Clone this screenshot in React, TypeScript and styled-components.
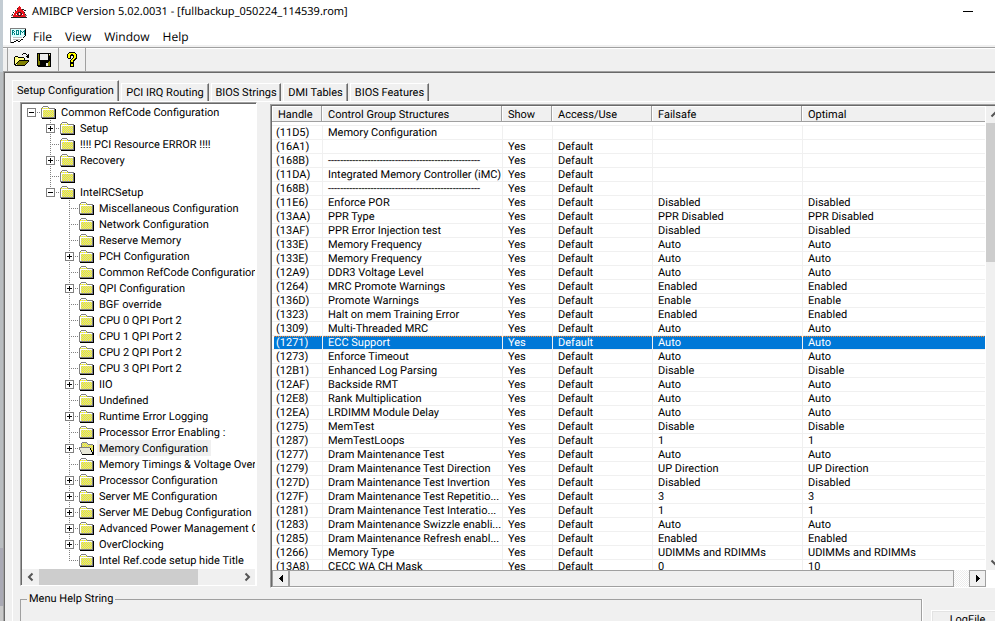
import React from "react";
import styled, { createGlobalStyle, css } from "styled-components";

const FACE = "#f0f0f0";
const SHADOW = "#a0a0a0";
const DARK = "#696969";
const BLUE = "#0078d7";

const GlobalStyle = createGlobalStyle`
  * { box-sizing: border-box; }
  html, body, #root { height: 100%; }
  body {
    margin: 0;
    overflow: hidden;
    font: 11px/14px Roboto, "Liberation Sans", sans-serif;
    text-rendering: geometricPrecision;
    color: #000;
    background: ${FACE};
  }
  button { font: inherit; color: inherit; border: 0; padding: 0; background: none; text-rendering: inherit; }
`;

const Screen = styled.div`
  display: flex;
  height: 100vh;
  overflow: hidden;
`;

const Backdrop = styled.div`
  flex: 0 0 3px;
  background: linear-gradient(#c3ccd3 0 72px, #b9bdc0 72px 548px, #a9a9b4 548px 606px, #c8c8c8 606px);
`;

const Window = styled.main`
  flex: 1;
  min-width: 0;
  display: flex;
  flex-direction: column;
`;

const TitleBar = styled.header`
  display: flex;
  align-items: center;
  gap: 5px;
  height: 24px;
  padding: 0 22px 0 8px;
  background: #fff;
  font: 11px/16px "Noto Sans", sans-serif;
`;

const Title = styled.h1`
  flex: 1;
  margin: 0;
  font: inherit;
  white-space: nowrap;
`;

const Minimize = styled.button`
  width: 10px;
  height: 10px;
  border-bottom: 1px solid #000;
  margin-bottom: 10px;
`;

const MenuBar = styled.nav`
  display: flex;
  align-items: center;
  gap: 7px;
  height: 21px;
  padding: 2px 0 0 7px;
  background: #fff;
  font: 12px/16px "Open Sans", sans-serif;
`;

const MenuItems = styled.div`
  display: flex;
  gap: 13px;
  padding-top: 2px;
`;

const ToolBar = styled.div`
  display: flex;
  align-items: stretch;
  height: 26px;
  padding: 3px 0 0 4px;
  background: linear-gradient(${FACE} 2px, ${SHADOW} 2px 3px, #fff 3px 4px, ${FACE} 4px);
`;

const ToolGroup = styled.div`
  display: flex;
  align-items: center;
  border-left: 1px solid ${SHADOW};
  padding: 0 6px;
  gap: 6px;

  &:last-child { border-right: 1px solid ${SHADOW}; padding: 0 5px; }
`;

const ToolButton = styled.button`
  display: flex;
  width: 16px;
  height: 16px;
`;

const Workspace = styled.div`
  flex: 1;
  min-height: 0;
  display: flex;
  flex-direction: column;
  border-top: 1px solid ${SHADOW};
  border-left: 1px solid ${SHADOW};
  background: ${FACE};
`;

const WorkspaceInner = styled.div`
  flex: 1;
  min-height: 0;
  display: flex;
  flex-direction: column;
  border-top: 1px solid ${DARK};
  border-left: 1px solid ${DARK};
  padding: 7px 0 0 7px;
`;

const Tabs = styled.div`
  display: flex;
  align-items: flex-end;
  gap: 2px;
  height: 21px;
`;

const Tab = styled.button<{ $selected?: boolean; $width: number }>`
  flex: 0 0 ${(p) => p.$width}px;
  height: 18px;
  border-top: 1px solid #fff;
  border-left: 1px solid #fff;
  border-right: 1px solid ${DARK};
  box-shadow: inset -1px 0 0 ${SHADOW};
  white-space: nowrap;
  ${(p) =>
    p.$selected &&
    css`
      height: 22px;
      margin-bottom: -1px;
      padding-bottom: 2px;
      background: ${FACE};
    `}
`;

const TabPage = styled.section`
  flex: 1;
  min-height: 0;
  display: flex;
  flex-direction: column;
  border-top: 1px solid #fff;
  border-left: 1px solid #fff;
`;

const Panes = styled.div`
  flex: 1;
  min-height: 0;
  display: flex;
  gap: 13px;
  padding-left: 7px;
`;

const Sunken = styled.div`
  display: flex;
  flex-direction: column;
  min-height: 0;
  background: #fff;
  border: 1px solid;
  border-color: ${SHADOW} #fff #fff ${SHADOW};
  box-shadow: inset 1px 1px 0 ${DARK};
  padding: 1px 0 0 1px;
`;

const TreePane = styled(Sunken)`
  flex: 0 0 237px;
  min-width: 0;
  margin-bottom: 2px;
`;

const ListPane = styled(Sunken)`
  flex: 1;
  min-width: 0;
  margin: 2px -9px 0 0;
`;

const Tree = styled.ul`
  flex: 1;
  min-height: 0;
  overflow: hidden;
  list-style: none;
  margin: 0 1px 0 0;
  padding: 0;
`;

const TreeRow = styled.li`
  display: flex;
  height: 16px;
  white-space: nowrap;

  > svg { flex: none; }
`;

const dots = (dir: string) => `repeating-linear-gradient(${dir}, #808080 0 1px, transparent 1px 2px)`;

type GuideKind = "blank" | "root" | "tee" | "end";

const Guide = styled.span<{ $kind: GuideKind }>`
  flex: 0 0 19px;
  display: flex;
  align-items: center;
  justify-content: center;
  background-repeat: no-repeat;
  ${(p) =>
    p.$kind !== "blank" &&
    css`
      background-image: ${dots("to right")}, ${dots("to bottom")};
      background-size: 10px 1px, 1px ${p.$kind === "tee" ? 16 : p.$kind === "end" ? 8 : 0}px;
      background-position: 9px 8px, 9px 0;
    `}
`;

const Expander = styled.button`
  display: flex;
  width: 9px;
  height: 9px;
  margin-top: 1px;
  background: #fff;
`;

const TreeLabel = styled.span<{ $selected?: boolean }>`
  margin-left: 2px;
  padding: 2px 3px 0 2px;
  line-height: 14px;
  background: ${(p) => (p.$selected ? FACE : "transparent")};
`;

const TreeScroll = styled.div`
  display: flex;
  align-items: center;
  height: 16px;
  background: ${FACE};
  margin-right: 1px;
`;

const FlatArrow = styled.button`
  flex: 0 0 17px;
  display: flex;
  justify-content: center;
`;

const FlatTrack = styled.div`
  flex: 1;
  align-self: stretch;
  display: flex;
`;

const FlatThumb = styled.div`
  flex: 0 0 80%;
  background: #cdcdcd;
`;

const ListBody = styled.div`
  flex: 1;
  min-height: 0;
  display: flex;
`;

const TableClip = styled.div`
  flex: 1;
  min-width: 0;
  overflow: hidden;
`;

const Table = styled.table`
  width: 100%;
  table-layout: fixed;
  border-collapse: separate;
  border-spacing: 0;
  white-space: nowrap;
`;

const Col = styled.col<{ $width?: number }>`
  width: ${(p) => (p.$width ? `${p.$width}px` : "auto")};
`;

const HeadCell = styled.th`
  height: 16px;
  padding: 2px 0 0 6px;
  line-height: 13px;
  text-align: left;
  font-weight: normal;
  background: ${FACE};
  border-bottom: 1px solid ${SHADOW};
  border-right: 1px solid ${SHADOW};
  box-shadow: inset 1px 1px 0 #fff;

  &:last-child { border-right: 0; }
`;

const SpacerCell = styled.td`
  height: 4px;
  padding: 0;
  border-bottom: 1px solid ${FACE};
`;

const Cell = styled.td`
  height: 14px;
  padding: 0 0 0 5px;
  line-height: 13px;
  overflow: hidden;
  border-bottom: 1px solid ${FACE};
  border-left: 1px solid ${FACE};

  &:first-child { padding-left: 4px; border-left: 0; }
`;

const Row = styled.tr<{ $selected?: boolean }>`
  ${(p) =>
    p.$selected &&
    css`
      color: #fff;
      ${Cell} {
        background: repeating-linear-gradient(to right, #ff8728 0 1px, ${BLUE} 1px 2px) top / 100% 1px no-repeat ${BLUE};
        background-clip: padding-box;
      }
      ${Cell}:first-child { box-shadow: inset 2px 0 0 #fff; }
    `}
`;

const VScroll = styled.div`
  flex: 0 0 17px;
  display: flex;
  flex-direction: column;
  margin-left: 1px;
  background: ${FACE};
`;

const VArrow = styled.button`
  flex: 0 0 17px;
  display: flex;
  align-items: center;
  justify-content: center;
`;

const VThumb = styled.div`
  flex: 0 0 139px;
  background: #cdcdcd;
`;

const VTrack = styled.div`
  flex: 1;
`;

const HScroll = styled.div`
  display: flex;
  height: 17px;
  margin-right: 17px;
  background: repeating-conic-gradient(#fff 0 25%, #ececec 0 50%) 0 0 / 2px 2px;
`;

const ClassicPart = styled.button<{ $grow?: boolean }>`
  flex: ${(p) => (p.$grow ? "1" : "0 0 17px")};
  margin-right: ${(p) => (p.$grow ? 15 : 0)}px;
  display: flex;
  align-items: center;
  justify-content: center;
  background: ${FACE};
  border: 1px solid ${SHADOW};
`;

const Footer = styled.div`
  display: flex;
  align-items: flex-start;
  gap: 9px;
  height: 33px;
  margin-right: -9px;
  padding-left: 7px;
`;

const Group = styled.fieldset`
  flex: 1;
  min-width: 0;
  height: 60px;
  margin: 4px 0 0;
  padding: 0 0 0 6px;
  border: 1px solid ${SHADOW};
  box-shadow: 1px 0 0 #fff;
`;

const Legend = styled.legend`
  padding: 0 2px;
  line-height: 14px;
`;

const LogButton = styled.button`
  flex: 0 0 73px;
  height: 20px;
  margin-top: 22px;
  border: 1px solid #fff;
  box-shadow: inset 1px 1px 0 #e3e3e3;
`;

function AmiIcon() {
  return (
    <svg width="16" height="12" viewBox="0 0 16 12" shapeRendering="crispEdges" aria-hidden="true">
      <path d="M8 0h1v1h1v2h1v1h1v1h1v2h1v2h1v2H2V9h1V7h1V5h2V3h1V1h1z" fill="#e8141c" />
      <path d="M6 2h1v1H6zM4 4h1v1H4zM2 6h1v1H2zM1 8h1v1H1zM11 3h2v1h-2zM13 4h2v1h-2zM13 6h1v1h-1zM14 8h1v1h-1zM7 6h3v1H7zM6 7h1v2H6zM10 7h1v2h-1zM7 9h3v1H7zM0 11h16v1H0z" fill="#222" />
      <path d="M8 7h1v2H8zM5 8h1v1H5zM11 8h1v1h-1z" fill="#fff" />
      <path d="M0 9h2v1H0zM14 9h2v1h-2z" fill="#888" />
    </svg>
  );
}

function RomIcon() {
  return (
    <svg width="16" height="16" viewBox="0 0 16 16" shapeRendering="crispEdges" aria-hidden="true">
      <path d="M0 0h16v9H0z" fill="#dff" />
      <path d="M0 0h16v1H0zM0 0h1v15H0z" fill="#808080" />
      <path d="M2 2h2v1H2zM2 2h1v5H2zM4 3h1v1H4zM2 4h2v1H2zM4 5h1v2H4zM6 2h3v1H6zM6 2h1v5H6zM8 2h1v5H8zM6 6h3v1H6zM10 2h1v5h-1zM14 2h1v5h-1zM11 3h1v1h-1zM13 3h1v1h-1zM12 4h1v1h-1z" fill="#008080" />
      <path d="M3 9h9v1H3zM3 11h7v1H3z" fill="#c0c0c0" />
      <path d="M15 1h1v7h-1zM14 8h1v1h-1zM13 9h1v1h-1zM11 11h2v1h-2zM10 12h1v1h-1zM8 13h2v1H8zM6 12h2v1H6zM4 13h2v1H4zM1 14h3v1H1z" fill="#000" />
    </svg>
  );
}

function OpenIcon() {
  return (
    <svg width="16" height="16" viewBox="0 0 16 16" shapeRendering="crispEdges" aria-hidden="true">
      <path d="M1 5h3v1h6v3H5v1H4v1H3v1H2v1H1z" fill="#ffff80" />
      <path d="M5 9h10v1h-1v1h-1v1h-1v1h-1v1H2v-1h1v-2h1v-1h1z" fill="#808000" />
      <path d="M1 4h3v1H1zM4 5h6v1H4zM0 5h1v8H0zM10 6h1v2h-1zM5 8h10v1H5zM4 9h1v1H4zM3 10h1v1H3zM2 11h1v1H2zM1 12h1v2H1zM14 9h1v1h-1zM13 10h1v1h-1zM12 11h1v1h-1zM11 12h1v1h-1zM2 13h9v1H2zM9 1h3v1H9zM8 2h1v1H8zM12 2h1v1h-1zM14 2h1v4h-1zM13 3h1v3h-1zM12 4h1v1h-1z" fill="#000" />
    </svg>
  );
}

function SaveIcon() {
  return (
    <svg width="16" height="16" viewBox="0 0 16 16" shapeRendering="crispEdges" aria-hidden="true">
      <path d="M1 1h14v14H2v-1H1z" fill="#000" />
      <path d="M2 2h1v7h1v1h9V9h1V4h-1V2h1v12h-2v-4H4v3H2z" fill="#808000" />
      <path d="M4 2h8v6H4zM10 11h2v3h-2z" fill="#ececec" />
      <path d="M13 2h1v1h-1z" fill="#ececec" />
    </svg>
  );
}

function HelpIcon() {
  return (
    <svg width="16" height="16" viewBox="0 0 16 16" shapeRendering="crispEdges" aria-hidden="true">
      <path d="M5 0h6v1h1v1h1v5h-1v1h-1v1h-1v2H6V8h1V7h1V6h1V4H7v3H4V6H3V2h1V1h1zM6 11h4v4H6z" fill="#000" />
      <path d="M5 1h6v1h1v4h-1v1h-1v1H9v2H7V8h1V7h1V6h1V3H9V2H7v1H6v3H4V2h1zM7 12h2v2H7z" fill="#ffff00" />
    </svg>
  );
}

function FolderIcon({ open }: { open?: boolean }) {
  return (
    <svg width="16" height="16" viewBox="0 0 16 16" shapeRendering="crispEdges" aria-hidden="true">
      <defs>
        <pattern id="weave" width="2" height="2" patternUnits="userSpaceOnUse">
          <path d="M0 0h2v2H0z" fill="#ffff00" />
          <path d="M0 0h1v1H0zM1 1h1v1H1z" fill="#c8c8c8" />
        </pattern>
      </defs>
      {open ? (
        <>
          <path d="M3 3h5v1h6v10H3z" fill="url(#weave)" />
          <path d="M3 2h5v1H3zM2 3h1v4H2zM8 3h1v1H8zM9 4h5v1H9zM0 7h11v1H0zM0 8h1v2H0zM1 10h1v2H1zM2 12h1v2H2z" fill="#808080" />
          <path d="M1 8h10v2h1v2h1v2H3v-2H2v-2H1z" fill="#e8e8d8" />
          <path d="M14 5h1v10H3v-1h10v-2h-1v-2h-1V8h1v2h1v2h1z" fill="#000" />
        </>
      ) : (
        <>
          <path d="M2 3h5v1h1v1h5v8H1V4h1z" fill="url(#weave)" />
          <path d="M2 2h5v1H2zM1 3h1v1H1zM7 3h1v1H7zM8 4h6v1H8zM0 4h1v9H0zM0 13h14v1H0zM13 5h1v8h-1z" fill="#808080" />
          <path d="M1 5h12v1H1zM1 5h1v8H1zM2 3h5v1H2z" fill="#fff" />
          <path d="M14 5h1v10H1v-1h13z" fill="#000" />
        </>
      )}
    </svg>
  );
}

function ExpanderMark({ expanded }: { expanded: boolean }) {
  return (
    <svg width="9" height="9" viewBox="0 0 9 9" shapeRendering="crispEdges" aria-hidden="true">
      <path d="M0 0h9v9H0zM1 1v7h7V1z" fillRule="evenodd" fill="#808080" />
      <path d={expanded ? "M2 4h5v1H2z" : "M2 4h5v1H2zM4 2h1v5H4z"} fill="#000" />
    </svg>
  );
}

function Chevron({ dir }: { dir: "left" | "right" | "up" | "down" }) {
  const d = {
    left: "M6.5 1.5 3 5l3.5 3.5",
    right: "M3.5 1.5 7 5 3.5 8.5",
    up: "M1.5 6.5 5 3l3.5 3.5",
    down: "M1.5 3.5 5 7l3.5-3.5",
  }[dir];
  return (
    <svg width="10" height="10" viewBox="0 0 10 10" aria-hidden="true">
      <path d={d} fill="none" stroke="#555" strokeWidth="2" />
    </svg>
  );
}

function Triangle({ dir }: { dir: "left" | "right" }) {
  return (
    <svg width="4" height="7" viewBox="0 0 4 7" shapeRendering="crispEdges" aria-hidden="true">
      <path d={dir === "left" ? "M3 0h1v7H3zM2 1h1v5H2zM1 2h1v3H1zM0 3h1v1H0z" : "M0 0h1v7H0zM1 1h1v5H1zM2 2h1v3H2zM3 3h1v1H3z"} />
    </svg>
  );
}

type Node = { level: number; label: string; mark?: "+" | "-"; selected?: boolean };

const nodes: Node[] = [
  { level: 0, label: "Common RefCode Configuration", mark: "-" },
  { level: 1, label: "Setup", mark: "+" },
  { level: 1, label: "!!!! PCI Resource ERROR !!!!" },
  { level: 1, label: "Recovery", mark: "+" },
  { level: 1, label: "" },
  { level: 1, label: "IntelRCSetup", mark: "-" },
  { level: 2, label: "Miscellaneous Configuration" },
  { level: 2, label: "Network Configuration" },
  { level: 2, label: "Reserve Memory" },
  { level: 2, label: "PCH Configuration", mark: "+" },
  { level: 2, label: "Common RefCode Configuration" },
  { level: 2, label: "QPI Configuration", mark: "+" },
  { level: 2, label: "BGF override" },
  { level: 2, label: "CPU 0 QPI Port 2" },
  { level: 2, label: "CPU 1 QPI Port 2" },
  { level: 2, label: "CPU 2 QPI Port 2" },
  { level: 2, label: "CPU 3 QPI Port 2" },
  { level: 2, label: "IIO", mark: "+" },
  { level: 2, label: "Undefined" },
  { level: 2, label: "Runtime Error Logging", mark: "+" },
  { level: 2, label: "Processor Error Enabling :" },
  { level: 2, label: "Memory Configuration", mark: "+", selected: true },
  { level: 2, label: "Memory Timings & Voltage Override" },
  { level: 2, label: "Processor Configuration", mark: "+" },
  { level: 2, label: "Server ME Configuration", mark: "+" },
  { level: 2, label: "Server ME Debug Configuration", mark: "+" },
  { level: 2, label: "Advanced Power Management Configuration", mark: "+" },
  { level: 2, label: "OverClocking", mark: "+" },
  { level: 2, label: "Intel Ref.code setup hide Title" },
];

const tabs = [
  { label: "Setup Configuration", width: 107 },
  { label: "PCI IRQ Routing", width: 88 },
  { label: "BIOS Strings", width: 70 },
  { label: "DMI Tables", width: 65 },
  { label: "BIOS Features", width: 79 },
];

const columns = [
  { label: "Handle", width: 50 },
  { label: "Control Group Structures", width: 180 },
  { label: "Show", width: 50 },
  { label: "Access/Use", width: 100 },
  { label: "Failsafe", width: 150 },
  { label: "Optimal" },
];

const RULE = "-".repeat(50);

const rows: string[][] = [
  ["(11D5)", "Memory Configuration", "", "", "", ""],
  ["(16A1)", "", "Yes", "Default", "", ""],
  ["(168B)", RULE, "Yes", "Default", "", ""],
  ["(11DA)", "Integrated Memory Controller (iMC)", "Yes", "Default", "", ""],
  ["(168B)", RULE, "Yes", "Default", "", ""],
  ["(11E6)", "Enforce POR", "Yes", "Default", "Disabled", "Disabled"],
  ["(13AA)", "PPR Type", "Yes", "Default", "PPR Disabled", "PPR Disabled"],
  ["(13AF)", "PPR Error Injection test", "Yes", "Default", "Disabled", "Disabled"],
  ["(133E)", "Memory Frequency", "Yes", "Default", "Auto", "Auto"],
  ["(133E)", "Memory Frequency", "Yes", "Default", "Auto", "Auto"],
  ["(12A9)", "DDR3 Voltage Level", "Yes", "Default", "Auto", "Auto"],
  ["(1264)", "MRC Promote Warnings", "Yes", "Default", "Enabled", "Enabled"],
  ["(136D)", "Promote Warnings", "Yes", "Default", "Enable", "Enable"],
  ["(1323)", "Halt on mem Training Error", "Yes", "Default", "Enabled", "Enabled"],
  ["(1309)", "Multi-Threaded MRC", "Yes", "Default", "Auto", "Auto"],
  ["(1271)", "ECC Support", "Yes", "Default", "Auto", "Auto"],
  ["(1273)", "Enforce Timeout", "Yes", "Default", "Auto", "Auto"],
  ["(12B1)", "Enhanced Log Parsing", "Yes", "Default", "Disable", "Disable"],
  ["(12AF)", "Backside RMT", "Yes", "Default", "Auto", "Auto"],
  ["(12E8)", "Rank Multiplication", "Yes", "Default", "Auto", "Auto"],
  ["(12EA)", "LRDIMM Module Delay", "Yes", "Default", "Auto", "Auto"],
  ["(1275)", "MemTest", "Yes", "Default", "Disable", "Disable"],
  ["(1287)", "MemTestLoops", "Yes", "Default", "1", "1"],
  ["(1277)", "Dram Maintenance Test", "Yes", "Default", "Auto", "Auto"],
  ["(1279)", "Dram Maintenance Test Direction", "Yes", "Default", "UP Direction", "UP Direction"],
  ["(127D)", "Dram Maintenance Test Invertion", "Yes", "Default", "Disabled", "Disabled"],
  ["(127F)", "Dram Maintenance Test Repetitio...", "Yes", "Default", "3", "3"],
  ["(1281)", "Dram Maintenance Test Interatio...", "Yes", "Default", "1", "1"],
  ["(1283)", "Dram Maintenance Swizzle enabli...", "Yes", "Default", "Auto", "Auto"],
  ["(1285)", "Dram Maintenance Refresh enabl...", "Yes", "Default", "Enabled", "Enabled"],
  ["(1266)", "Memory Type", "Yes", "Default", "UDIMMs and RDIMMs", "UDIMMs and RDIMMs"],
  ["(13A8)", "CECC WA CH Mask", "Yes", "Default", "0", "10"],
];

function guidesFor(node: Node, index: number): GuideKind[] {
  if (node.level === 0) return ["root"];
  const last = !nodes.slice(index + 1).some((n) => n.level === node.level);
  return [...Array<GuideKind>(node.level).fill("blank"), last ? "end" : "tee"];
}

function TreeItem({ node, index }: { node: Node; index: number }) {
  const guides = guidesFor(node, index);
  return (
    <TreeRow role="treeitem" aria-level={node.level + 1} aria-selected={!!node.selected}>
      {guides.map((kind, i) => (
        <Guide key={i} $kind={kind}>
          {i === guides.length - 1 && node.mark && (
            <Expander aria-label={node.mark === "-" ? "Collapse" : "Expand"}>
              <ExpanderMark expanded={node.mark === "-"} />
            </Expander>
          )}
        </Guide>
      ))}
      <FolderIcon open={node.selected} />
      {node.label && <TreeLabel $selected={node.selected}>{node.label}</TreeLabel>}
    </TreeRow>
  );
}

export default function App() {
  return (
    <Screen>
      <GlobalStyle />
      <Backdrop />
      <Window>
        <TitleBar>
          <AmiIcon />
          <Title>AMIBCP Version 5.02.0031 - [fullbackup_050224_114539.rom]</Title>
          <Minimize aria-label="Minimize" />
        </TitleBar>
        <MenuBar>
          <RomIcon />
          <MenuItems>
            <button>File</button>
            <button>View</button>
            <button>Window</button>
            <button>Help</button>
          </MenuItems>
        </MenuBar>
        <ToolBar>
          <ToolGroup>
            <ToolButton aria-label="Open"><OpenIcon /></ToolButton>
            <ToolButton aria-label="Save"><SaveIcon /></ToolButton>
          </ToolGroup>
          <ToolGroup>
            <ToolButton aria-label="Help"><HelpIcon /></ToolButton>
          </ToolGroup>
        </ToolBar>
        <Workspace>
          <WorkspaceInner>
            <Tabs role="tablist">
              {tabs.map((tab, i) => (
                <Tab key={tab.label} role="tab" aria-selected={i === 0} $selected={i === 0} $width={tab.width}>
                  {tab.label}
                </Tab>
              ))}
            </Tabs>
            <TabPage>
              <Panes>
                <TreePane>
                  <Tree role="tree">
                    {nodes.map((node, i) => (
                      <TreeItem key={i} node={node} index={i} />
                    ))}
                  </Tree>
                  <TreeScroll>
                    <FlatArrow aria-label="Scroll left"><Chevron dir="left" /></FlatArrow>
                    <FlatTrack><FlatThumb /></FlatTrack>
                    <FlatArrow aria-label="Scroll right"><Chevron dir="right" /></FlatArrow>
                  </TreeScroll>
                </TreePane>
                <ListPane>
                  <ListBody>
                    <TableClip>
                      <Table>
                        <colgroup>
                          {columns.map((c) => <Col key={c.label} $width={c.width} />)}
                        </colgroup>
                        <thead>
                          <tr>{columns.map((c) => <HeadCell key={c.label}>{c.label}</HeadCell>)}</tr>
                        </thead>
                        <tbody>
                          <tr><SpacerCell colSpan={6} /></tr>
                          {rows.map((row, i) => (
                            <Row key={i} $selected={row[0] === "(1271)"}>
                              {row.map((text, j) => <Cell key={j}>{text}</Cell>)}
                            </Row>
                          ))}
                        </tbody>
                      </Table>
                    </TableClip>
                    <VScroll>
                      <VArrow aria-label="Scroll up"><Chevron dir="up" /></VArrow>
                      <VThumb />
                      <VTrack />
                      <VArrow aria-label="Scroll down"><Chevron dir="down" /></VArrow>
                    </VScroll>
                  </ListBody>
                  <HScroll>
                    <ClassicPart aria-label="Scroll left"><Triangle dir="left" /></ClassicPart>
                    <ClassicPart aria-label="Scroll position" $grow />
                    <ClassicPart aria-label="Scroll right"><Triangle dir="right" /></ClassicPart>
                  </HScroll>
                </ListPane>
              </Panes>
              <Footer>
                <Group>
                  <Legend>Menu Help String</Legend>
                </Group>
                <LogButton>LogFile</LogButton>
              </Footer>
            </TabPage>
          </WorkspaceInner>
        </Workspace>
      </Window>
    </Screen>
  );
}
